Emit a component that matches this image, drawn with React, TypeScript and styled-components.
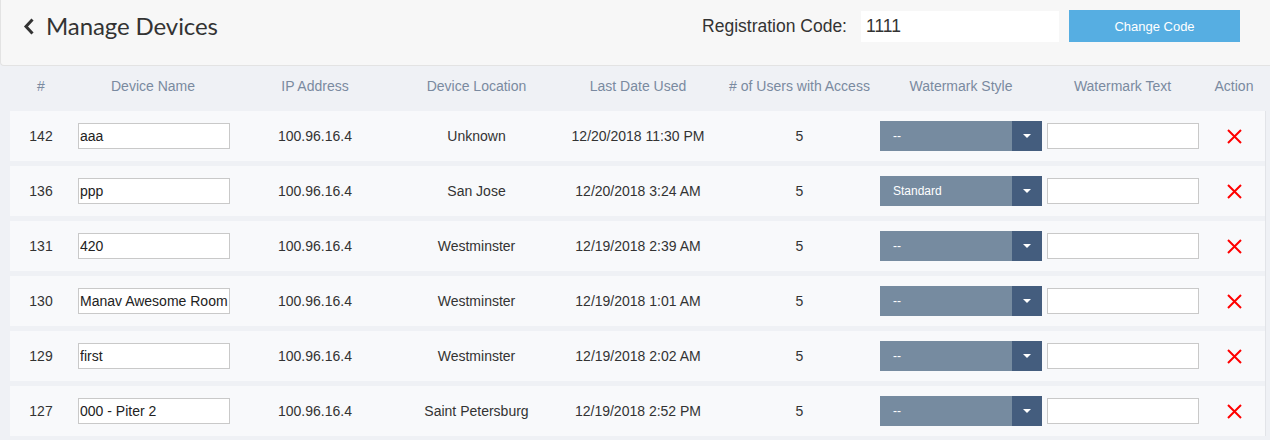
import React from 'react';
import styled, { createGlobalStyle } from 'styled-components';

const GlobalStyle = createGlobalStyle`
  html, body {
    margin: 0;
    padding: 0;
    background: #eff1f5;
    font-family: "Liberation Sans", Arial, sans-serif;
    overflow: hidden;
  }
`;

const Page = styled.div`
  width: 1270px;
  height: 440px;
  background: #eff1f5;
`;

const Header = styled.header`
  display: flex;
  align-items: center;
  justify-content: space-between;
  box-sizing: border-box;
  height: 66px;
  padding: 10px 30px 23px 22px;
  background: #f7f7f7;
  border-left: 1px solid #e3e3e3;
  border-bottom: 1px solid #e3e3e3;
  border-bottom-left-radius: 4px;
`;

const TitleWrap = styled.div`
  display: flex;
  align-items: center;
  gap: 11px;
`;

const Title = styled.h1`
  margin: 0;
  font-family: Lato, "Liberation Sans", sans-serif;
  font-weight: 400;
  font-size: 24px;
  letter-spacing: -0.1px;
  color: #333;
  line-height: 32px;
`;

const CodeForm = styled.div`
  display: flex;
  align-items: center;
`;

const CodeLabel = styled.span`
  font-size: 17.5px;
  color: #333;
  margin-right: 14px;
`;

const CodeInput = styled.input`
  box-sizing: border-box;
  width: 198px;
  height: 31px;
  border: none;
  outline: none;
  background: #fff;
  padding: 0 5px;
  font-family: "Liberation Sans", Arial, sans-serif;
  font-size: 17.5px;
  color: #333;
  margin-right: 10px;
`;

const ChangeButton = styled.button`
  width: 171px;
  height: 32px;
  border: none;
  background: #56aee2;
  color: #fff;
  font-family: "Liberation Sans", Arial, sans-serif;
  font-size: 13px;
  cursor: pointer;
`;

const Table = styled.div`
  padding-left: 10px;
`;

const Columns = '62px 162px 162px 161px 162px 161px 162px 161px 62px';

const HeadRow = styled.div`
  display: grid;
  grid-template-columns: ${Columns};
  align-items: center;
  height: 45px;
  box-sizing: border-box;
  padding-bottom: 6px;
`;

const HeadCell = styled.div`
  text-align: center;
  font-size: 14px;
  color: #7a8aa0;
  white-space: nowrap;
`;

const Body = styled.div`
  display: flex;
  flex-direction: column;
  gap: 5px;
  width: 1256px;
  box-sizing: border-box;
  border-right: 1px solid #e2e4e8;
`;

const Row = styled.div`
  display: grid;
  grid-template-columns: ${Columns};
  align-items: center;
  height: 50px;
  background: #f8f9fb;
`;

const Cell = styled.div<{ $start?: boolean }>`
  display: flex;
  justify-content: ${({ $start }) => ($start ? 'flex-start' : 'center')};
  padding-left: ${({ $start }) => ($start ? '6px' : '0')};
  align-items: center;
  font-size: 14px;
  color: #333;
  white-space: nowrap;
`;

const TextBox = styled.input`
  box-sizing: border-box;
  width: 152px;
  height: 26px;
  border: 1px solid #c9c9c9;
  background: #fff;
  padding: 0 1px;
  font-family: "Liberation Sans", Arial, sans-serif;
  font-size: 14px;
  color: #222;
  outline: none;
`;

const Select = styled.div`
  display: flex;
  width: 162px;
  height: 30px;
  background: #768ba0;
  color: #fff;
  font-size: 12px;
`;

const SelectValue = styled.span`
  flex: 1;
  display: flex;
  align-items: center;
  padding-left: 13px;
`;

const SelectArrow = styled.span`
  width: 30px;
  display: flex;
  align-items: center;
  justify-content: center;
  background: #445d7e;

  &::after {
    content: '';
    border-left: 4px solid transparent;
    border-right: 4px solid transparent;
    border-top: 4px solid #fff;
  }
`;

const DeleteButton = styled.button`
  border: none;
  background: none;
  padding: 0;
  display: flex;
  cursor: pointer;
`;

const devices = [
  { id: 142, name: 'aaa', location: 'Unknown', date: '12/20/2018 11:30 PM', users: 5, style: '--' },
  { id: 136, name: 'ppp', location: 'San Jose', date: '12/20/2018 3:24 AM', users: 5, style: 'Standard' },
  { id: 131, name: '420', location: 'Westminster', date: '12/19/2018 2:39 AM', users: 5, style: '--' },
  { id: 130, name: 'Manav Awesome Room', location: 'Westminster', date: '12/19/2018 1:01 AM', users: 5, style: '--' },
  { id: 129, name: 'first', location: 'Westminster', date: '12/19/2018 2:02 AM', users: 5, style: '--' },
  { id: 127, name: '000 - Piter 2', location: 'Saint Petersburg', date: '12/19/2018 2:52 PM', users: 5, style: '--' },
];

const headings = [
  '#',
  'Device Name',
  'IP Address',
  'Device Location',
  'Last Date Used',
  '# of Users with Access',
  'Watermark Style',
  'Watermark Text',
  'Action',
];

const BackIcon = () => (
  <svg width="12" height="17" viewBox="0 0 12 17">
    <polyline points="9.5,1.5 3,8.5 9.5,15.5" fill="none" stroke="#333" strokeWidth="3" />
  </svg>
);

const CrossIcon = () => (
  <svg width="15" height="15" viewBox="0 0 15 15">
    <path d="M1 1 L14 14 M14 1 L1 14" stroke="#ff0000" strokeWidth="2" />
  </svg>
);

export default function App() {
  return (
    <Page>
      <GlobalStyle />
      <Header>
        <TitleWrap>
          <BackIcon />
          <Title>Manage Devices</Title>
        </TitleWrap>
        <CodeForm>
          <CodeLabel>Registration Code:</CodeLabel>
          <CodeInput defaultValue="1111" />
          <ChangeButton>Change Code</ChangeButton>
        </CodeForm>
      </Header>
      <Table>
        <HeadRow>
          {headings.map((h) => (
            <HeadCell key={h}>{h}</HeadCell>
          ))}
        </HeadRow>
        <Body>
          {devices.map((d) => (
            <Row key={d.id}>
              <Cell>{d.id}</Cell>
              <Cell $start>
                <TextBox defaultValue={d.name} />
              </Cell>
              <Cell>100.96.16.4</Cell>
              <Cell>{d.location}</Cell>
              <Cell>{d.date}</Cell>
              <Cell>{d.users}</Cell>
              <Cell>
                <Select>
                  <SelectValue>{d.style}</SelectValue>
                  <SelectArrow />
                </Select>
              </Cell>
              <Cell>
                <TextBox />
              </Cell>
              <Cell>
                <DeleteButton>
                  <CrossIcon />
                </DeleteButton>
              </Cell>
            </Row>
          ))}
        </Body>
      </Table>
    </Page>
  );
}
